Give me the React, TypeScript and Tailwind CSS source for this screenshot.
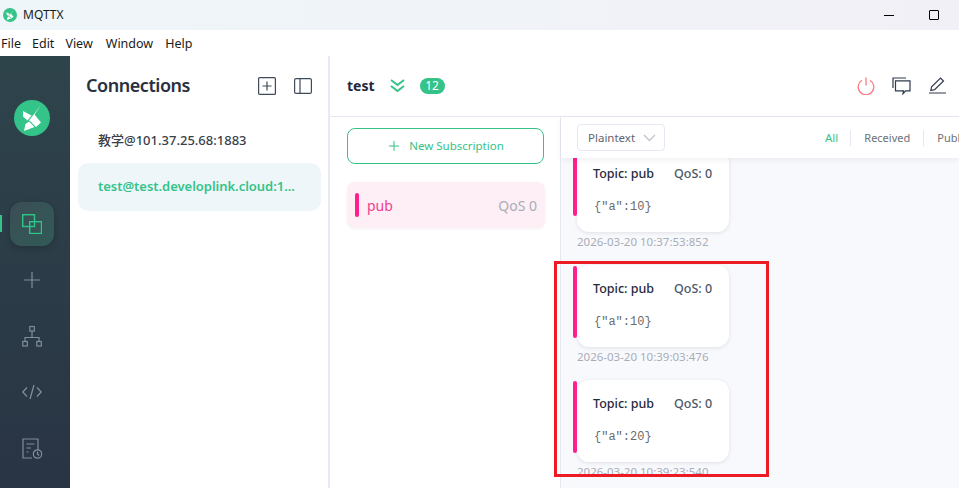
import React from "react";

function Logo({ size }: { size: number }) {
  return (
    <svg width={size} height={size} viewBox="0 0 36 36">
      <circle cx="18" cy="18" r="18" fill="#34c388" />
      <path d="M9 11 L17.500 15.500 L13.500 20.500 L9 16.500 Z" fill="#fff" />
      <path d="M27 5 L20.500 14.500 L27 22.500 L22 27 L16.500 21.500 L15 20.500 Z" fill="#fff" />
      <path d="M10 31 L11.500 24 L15 21.500 L20.500 27 Z" fill="#fff" />
      <path d="M15.500 21.500 L21 27" stroke="#34c388" strokeWidth="0.800" fill="none" />
    </svg>
  );
}

function Message({ body, time, clip }: { body: string; time: string; clip?: boolean }) {
  return (
    <div className={clip ? "relative pl-[16px] -mt-[8px]" : "relative pl-[16px]"}>
      <div className={clip ? "absolute left-[12px] top-0 w-[4px] h-[66px] rounded-[2px] bg-[#ff1f8e]" : "absolute left-[12px] top-[1px] w-[4px] h-[72px] rounded-[2px] bg-[#ff1f8e]"} />
      <div className="w-[152px] h-[82px] bg-white rounded-[12px] shadow-[0_1px_4px_rgba(0,0,0,0.1)] pl-[16px] pt-[14px]">
        <div className="flex items-baseline leading-[20px] font-medium">
          <span className="w-[81px] text-[12.500px] text-[#1f2a3c]">Topic: pub</span>
          <span className="text-[12.500px] text-[#4d5766]">QoS: 0</span>
        </div>
        <div className="mt-[15px] pl-[1px] font-['Liberation_Mono',monospace] text-[12px] leading-[16px] text-[#6b6b6b]">{body}</div>
      </div>
      <div className="text-[11.500px] leading-[20px] text-[#a9adb5]">{time}</div>
    </div>
  );
}

export default function App() {
  return (
    <div className="relative w-[959px] h-[488px] overflow-hidden bg-white flex flex-col font-['Noto_Sans','Noto_Sans_CJK_SC',sans-serif]">
      {/* Title bar */}
      <div className="h-[30px] shrink-0 flex items-center bg-gradient-to-r from-[#eff6f9] to-[#f1f0f6] pl-[3px]">
        <Logo size={14} />
        <span className="ml-[6px] text-[12px] text-[#1a1a1a]">MQTTX</span>
        <div className="ml-auto flex items-center pr-[20px] gap-[35px]">
          <div className="w-[10px] h-[1px] bg-black" />
          <div className="w-[10px] h-[10px] border border-black rounded-[1px]" />
        </div>
      </div>
      {/* Menu */}
      <div className="h-[26px] shrink-0 flex items-center pt-[2px] bg-white text-[12.500px] text-[#1a1a1a]">
        <span className="ml-[1px]">File</span>
        <span className="ml-[11px]">Edit</span>
        <span className="ml-[11px]">View</span>
        <span className="ml-[13px]">Window</span>
        <span className="ml-[12px]">Help</span>
      </div>
      <div className="flex-1 flex min-h-0">
        {/* Left rail */}
        <div className="w-[70px] shrink-0 bg-gradient-to-b from-[#2e444b] to-[#293444] flex flex-col items-center pr-[6px] relative">
          <div className="mt-[44px] mb-[66px]"><Logo size={36} /></div>
          <div className="absolute left-0 top-[159px] w-[2px] h-[17px] bg-[#34c388]" />
          <div className="w-[44px] h-[44px] rounded-[12px] bg-gradient-to-br from-[#3b4d55] to-[#2f5b56] shadow-[0_2px_6px_rgba(0,0,0,0.2)] flex items-center justify-center">
            <svg width="20" height="20" viewBox="0 0 20 20" fill="none" stroke="#2fc589" strokeWidth="1.400">
              <rect x="0.700" y="0.700" width="11.800" height="11.800" />
              <rect x="7.700" y="7.700" width="11.800" height="11.800" />
            </svg>
          </div>
          <div className="mt-[22px] flex flex-col gap-[32px] items-center">
            <svg width="24" height="24" viewBox="0 0 24 24" fill="none" stroke="#808e98" strokeWidth="1.200"><path d="M12 4v16M4 12h16" /></svg>
            <svg width="24" height="24" viewBox="0 0 24 24" fill="none" stroke="#808e98" strokeWidth="1.200"><path d="M12 7v6M5 18v-4.500h14V18" /><rect x="9.800" y="2.500" width="4.500" height="4.500" /><rect x="2.800" y="17.500" width="4.500" height="4.500" /><rect x="16.800" y="17.500" width="4.500" height="4.500" /></svg>
            <svg width="24" height="24" viewBox="0 0 24 24" fill="none" stroke="#808e98" strokeWidth="1.300"><path d="M7 7.500L2.800 12L7 16.500M17 7.500L21.200 12L17 16.500M14 5l-4 14" /></svg>
            <svg width="24" height="24" viewBox="0 0 24 24" fill="none" stroke="#808e98" strokeWidth="1.200"><path d="M12 22H3V3h15v11M6.500 8h8M6.500 12h4.500M6.500 16h2" /><circle cx="17.500" cy="18" r="4.200" /><path d="M17.500 15.500V18l1.700 1.500" /></svg>
          </div>
        </div>
        {/* Connections */}
        <div className="w-[260px] shrink-0 border-r-[2px] border-[#e8e9f2] bg-white">
          <div className="h-[60px] flex items-center pl-[16px]">
            <span className="text-[18px] font-semibold text-[#29303f] tracking-[-0.450px] -mt-[1px]">Connections</span>
            <div className="ml-auto flex items-center gap-[18px] pr-[16px]">
              <svg width="18" height="18" viewBox="0 0 18 18" fill="none" stroke="#3f4a5a" strokeWidth="1.200"><rect x="0.600" y="0.600" width="16.800" height="16.800" rx="1" /><path d="M9 4.500v9M4.500 9h9" /></svg>
              <svg width="18" height="16" viewBox="0 0 18 16" fill="none" stroke="#3f4a5a" strokeWidth="1.200"><rect x="0.600" y="0.600" width="16.800" height="14.800" rx="1.500" /><path d="M6 0.600v14.800" /></svg>
            </div>
          </div>
          <div className="h-[47px] pt-[2px] flex items-center pl-[28px] text-[13px] font-medium text-[#3a3f4a]">教学@101.37.25.68:1883</div>
          <div className="ml-[8px] w-[243px] h-[48px] rounded-[10px] bg-[#eff6fa] flex items-center pl-[20px] text-[13px] font-semibold text-[#34c388] tracking-[-0.030px]">test@test.developlink.cloud:1...</div>
        </div>
        {/* Main */}
        <div className="flex-1 min-w-0 flex flex-col">
          <div className="h-[61px] shrink-0 border-b border-[#e6e8f1] flex items-center pl-[17px] pb-[1px]">
            <span className="text-[14px] font-bold text-[#1f2a3c]">test</span>
            <svg className="ml-[15px]" width="15" height="15" viewBox="0 0 15 15" fill="none" stroke="#34c388" strokeWidth="2"><path d="M1 2l6.500 5L14 2M1 8l6.500 5L14 8" /></svg>
            <span className="ml-[15px] w-[25px] h-[16px] rounded-full bg-[#34c388] text-white text-[12px] leading-[16px] text-center">12</span>
            <div className="ml-auto flex items-center gap-[17px] pr-[12px]">
              <svg width="18" height="18" viewBox="0 0 18 18" fill="none" stroke="#fa7a80" strokeWidth="1.300"><path d="M5 3.300a7.800 7.800 0 1 0 8 0" /><path d="M9 0.500v8" /></svg>
              <svg width="19" height="18" viewBox="0 0 19 18" fill="none" stroke="#2f3a4c" strokeWidth="1.200"><path d="M1 11V1h13" /><path d="M3.500 3.800H18v10h-4.500l-2.500 3 .500-3H3.500z" /></svg>
              <svg width="19" height="17" viewBox="0 0 19 17" fill="none" stroke="#2f3a4c" strokeWidth="1.200"><path d="M1 16h17M2.800 13.500l.8-3.800L12.500 1l3 3-8.900 8.700z" /></svg>
            </div>
          </div>
          <div className="flex-1 flex min-h-0">
            <div className="w-[231px] shrink-0 border-r border-[#e6e8f1] pl-[17px] pt-[11px]">
              <div className="w-[197px] h-[36px] rounded-[8px] border border-[#34c388] flex items-center justify-center pl-[1px] text-[11.500px] text-[#34c388]">
                <svg className="mr-[9px]" width="12" height="12" viewBox="0 0 12 12" fill="none" stroke="#34c388" strokeWidth="1"><path d="M6 1v10M1 6h10" /></svg>
                New Subscription
              </div>
              <div className="mt-[18px] w-[198px] h-[46px] rounded-[8px] bg-[#fdeff5] shadow-[0_1px_3px_rgba(0,0,0,0.06)] flex items-center pl-[8px] pr-[8px]">
                <div className="w-[4px] h-[24px] rounded-[2px] bg-[#ff1f8e]" />
                <span className="ml-[8px] text-[14px] text-[#f0408f]">pub</span>
                <span className="ml-auto text-[14px] text-[#a9adb5]">QoS 0</span>
              </div>
            </div>
            <div className="flex-1 min-w-0 bg-[#f8f9fd] flex flex-col">
              <div className="h-[41px] shrink-0 bg-white shadow-[0_2px_6px_rgba(0,0,0,0.06)] relative z-10 flex items-center pl-[16px]">
                <div className="w-[88px] h-[27px] rounded-[4px] border border-[#e6e8f1] flex items-center pl-[10px] text-[11.500px] text-[#5f6570]">
                  Plaintext
                  <svg className="ml-[8px]" width="13" height="8" viewBox="0 0 13 8" fill="none" stroke="#c0c4cc" strokeWidth="1.300"><path d="M1 1l5.500 5.500L12 1" /></svg>
                </div>
                <div className="ml-auto flex items-center text-[11px] text-[#6b7078] whitespace-nowrap w-[135px] overflow-hidden">
                  <span className="text-[#34c388] text-[11.500px] pr-[12px] border-r border-[#e6e8f1] leading-[16px] pl-[1px]">All</span>
                  <span className="px-[13px] border-r border-[#e6e8f1] leading-[16px]">Received</span>
                  <span className="pl-[13px] leading-[16px]">Publ</span>
                </div>
              </div>
              <div className="flex-1 min-h-0 overflow-hidden flex flex-col gap-[13px]">
                <Message clip body={'{"a":10}'} time="2026-03-20 10:37:53:852" />
                <Message body={'{"a":10}'} time="2026-03-20 10:39:03:476" />
                <Message body={'{"a":20}'} time="2026-03-20 10:39:23:540" />
              </div>
            </div>
          </div>
        </div>
      </div>
      {/* Red annotation drawn over the screenshot */}
      <div className="absolute left-[554px] top-[261px] w-[215px] h-[216px] border-[3px] border-[#ed1c24]" />
    </div>
  );
}
